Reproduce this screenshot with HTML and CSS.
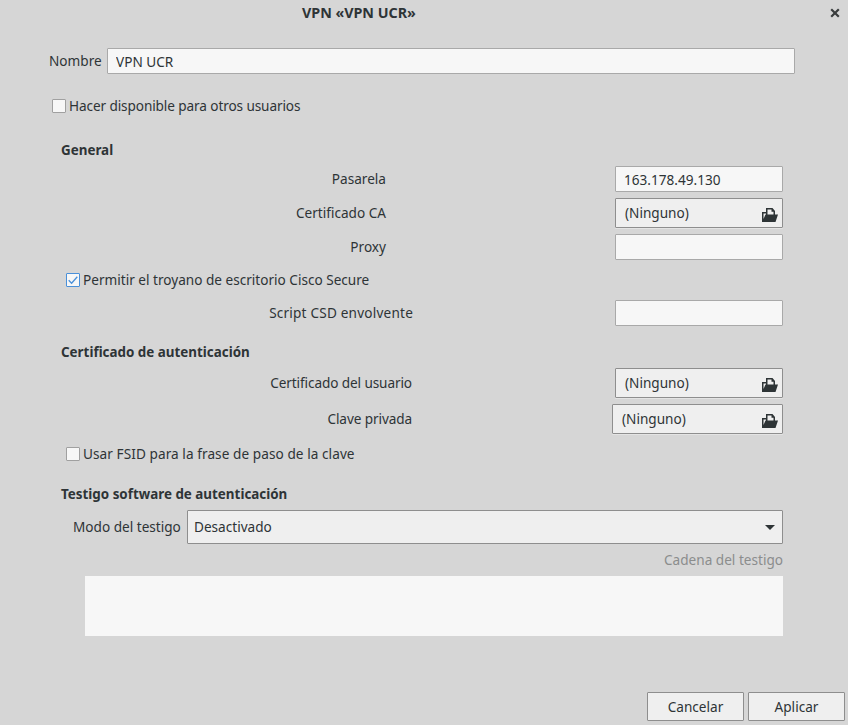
FILE: index.html
```html
<!DOCTYPE html>
<html lang="es">
<head>
<meta charset="utf-8">
<title>VPN «VPN UCR»</title>
<link rel="stylesheet" href="styles.css">
</head>
<body>
<div class="dialog">
  <header class="titlebar">
    <h1 class="title">VPN «VPN UCR»</h1>
    <button class="close" aria-label="Cerrar"><svg width="10" height="10" viewBox="0 0 10 10"><path d="M1.200 1.200 8.800 8.800M8.800 1.200 1.200 8.800" stroke="#3a3d3e" stroke-width="2.200" fill="none"/></svg></button>
  </header>
  <div class="name-row">
    <label class="name-label">Nombre</label>
    <input class="entry name-entry" value="VPN UCR">
  </div>
  <label class="check check-top"><span class="box"></span><span class="tight">Hacer disponible para otros usuarios</span></label>

  <section class="group">
    <h2 class="heading h-general">General</h2>
    <div class="row r-gateway"><span class="lbl w-386">Pasarela</span><input class="entry field" value="163.178.49.130"></div>
    <div class="row r-ca"><span class="lbl w-386">Certificado CA</span>
      <button class="file field"><span>(Ninguno)</span><svg class="doc" width="16" height="16" viewBox="0 0 16 16"><path fill="#2e3436" fill-rule="evenodd" d="M4 1h6.500L13 4v3.500h-1.500V4.800h-2V2.500h-4v5H4zM0 5h4v1.500H1.500V12l2-4.500H16L13.500 15H0z"/></svg></button></div>
    <div class="row r-proxy"><span class="lbl w-386">Proxy</span><input class="entry field"></div>
    <label class="check check-trojan"><span class="box on"><svg width="14" height="14" viewBox="0 0 14 14"><path d="M2.700 7.200 5.600 10.200 11.300 3.700" stroke="#4a90d9" stroke-width="1.300" fill="none"/></svg></span>Permitir el troyano de escritorio Cisco Secure</label>
    <div class="row r-script"><span class="lbl w-413 loose">Script CSD envolvente</span><input class="entry field"></div>
  </section>

  <section class="group">
    <h2 class="heading h-cert">Certificado de autenticación</h2>
    <div class="row r-user"><span class="lbl w-412 tight">Certificado del usuario</span>
      <button class="file field"><span>(Ninguno)</span><svg class="doc" width="16" height="16" viewBox="0 0 16 16"><path fill="#2e3436" fill-rule="evenodd" d="M4 1h6.500L13 4v3.500h-1.500V4.800h-2V2.500h-4v5H4zM0 5h4v1.500H1.500V12l2-4.500H16L13.500 15H0z"/></svg></button></div>
    <div class="row r-key"><span class="lbl w-412 tight">Clave privada</span>
      <button class="file field wide"><span>(Ninguno)</span><svg class="doc" width="16" height="16" viewBox="0 0 16 16"><path fill="#2e3436" fill-rule="evenodd" d="M4 1h6.500L13 4v3.500h-1.500V4.800h-2V2.500h-4v5H4zM0 5h4v1.500H1.500V12l2-4.500H16L13.500 15H0z"/></svg></button></div>
    <label class="check check-fsid"><span class="box"></span><span class="slight">Usar FSID para la frase de paso de la clave</span></label>
  </section>

  <section class="group">
    <h2 class="heading h-token">Testigo software de autenticación</h2>
    <div class="mode-row"><span class="mode-label">Modo del testigo</span>
      <button class="combo"><span>Desactivado</span><i class="arrow"></i></button></div>
    <div class="dim">Cadena del testigo</div>
    <div class="textarea"></div>
  </section>

  <footer class="actions">
    <button class="btn">Cancelar</button>
    <button class="btn">Aplicar</button>
  </footer>
</div>
</body>
</html>
```
FILE: styles.css
```css
* { box-sizing: border-box; }
html, body { margin: 0; height: 100%; }
body { background: #d6d6d6; color: #2e3436; font: 13.6px/20px "Noto Sans", sans-serif; overflow: hidden; }
.dialog { width: 848px; height: 725px; display: flex; flex-direction: column; }
button, input { font: inherit; color: inherit; margin: 0; }

.tight { letter-spacing: -0.1px; }
.slight { letter-spacing: 0.07px; }
.loose { letter-spacing: 0.2px; }

.titlebar { height: 26px; display: flex; align-items: center; padding: 0 8px 0 302px; }
.title { font-size: 14.300px; font-weight: 700; margin: 0; flex: 1; line-height: 26px; }
.close { width: 10px; height: 10px; padding: 0; border: 0; background: none; display: flex; }

.entry { height: 26px; background: #f7f7f7; border: 1px solid #a9a9a9; border-radius: 1px; padding: 0 8px; outline: 0; }
.name-row { margin-top: 22px; margin-left: 49px; margin-right: 53px; display: flex; align-items: center; gap: 6px; }
.name-label { width: 52px; flex: none; }
.name-entry { flex: 1; min-width: 0; }

.check { display: flex; align-items: center; height: 20px; }
.box { width: 14px; height: 14px; background: #f7f7f7; border: 1px solid #a0a0a0; border-radius: 1px; margin-right: 3px; display: flex; flex: none; }
.box.on { border-color: #4a90d9; }
.box.on svg { margin: -1px; }
.check-top { margin: 22px 0 0 52px; }

.heading { font-size: 13.400px; font-weight: 700; margin: 0 0 0 61px; line-height: 20px; }
.h-general { margin-top: 24px; }
.h-cert { margin-top: 16px; }
.h-token { margin-top: 20px; }

.row { display: flex; align-items: center; padding-right: 65px; }
.lbl { text-align: right; flex: none; }
.w-386 { width: 386px; }
.w-413 { width: 413px; }
.w-412 { width: 412px; }
.field { margin-left: auto; width: 168px; }
.r-gateway { margin-top: 6px; }
.r-ca { margin-top: 6px; }
.r-proxy { margin-top: 6px; }
.r-script { margin-top: 10px; }
.r-user { margin-top: 6px; }
.r-key { margin-top: 6px; }

.file { height: 30px; display: flex; align-items: center; justify-content: space-between; background: #efefef; border: 1px solid #8e8e8e; border-radius: 1px; padding: 0 4px 0 9px; box-shadow: 0 1px 0 rgba(255,255,255,.35); }
.wide { width: 171px; }
.doc { flex: none; margin-top: 4px; }

.check-trojan { margin: 10px 0 0 66px; }
.check-fsid { margin: 10px 0 0 66px; }

.mode-row { margin: 6px 65px 0 73px; display: flex; align-items: center; gap: 6px; }
.mode-label { width: 108px; flex: none; }
.combo { flex: 1; height: 34px; display: flex; align-items: center; justify-content: space-between; background: #efefef; border: 1px solid #8e8e8e; border-radius: 1px; padding: 0 7px 0 6px; text-align: left; }
.arrow { width: 0; height: 0; border-left: 5px solid transparent; border-right: 5px solid transparent; border-top: 5px solid #2e3436; }
.dim { color: #8b8d8d; text-align: right; margin: 6px 65px 0 0; }
.textarea { height: 60px; margin: 6px 65px 0 85px; background: #f7f7f7; }

.actions { margin-top: auto; display: flex; justify-content: flex-end; gap: 4px; padding: 0 3px 4px 0; }
.btn { width: 97px; height: 29px; background: #efefef; border: 1px solid #8e8e8e; border-radius: 1px; padding: 0; }
```
